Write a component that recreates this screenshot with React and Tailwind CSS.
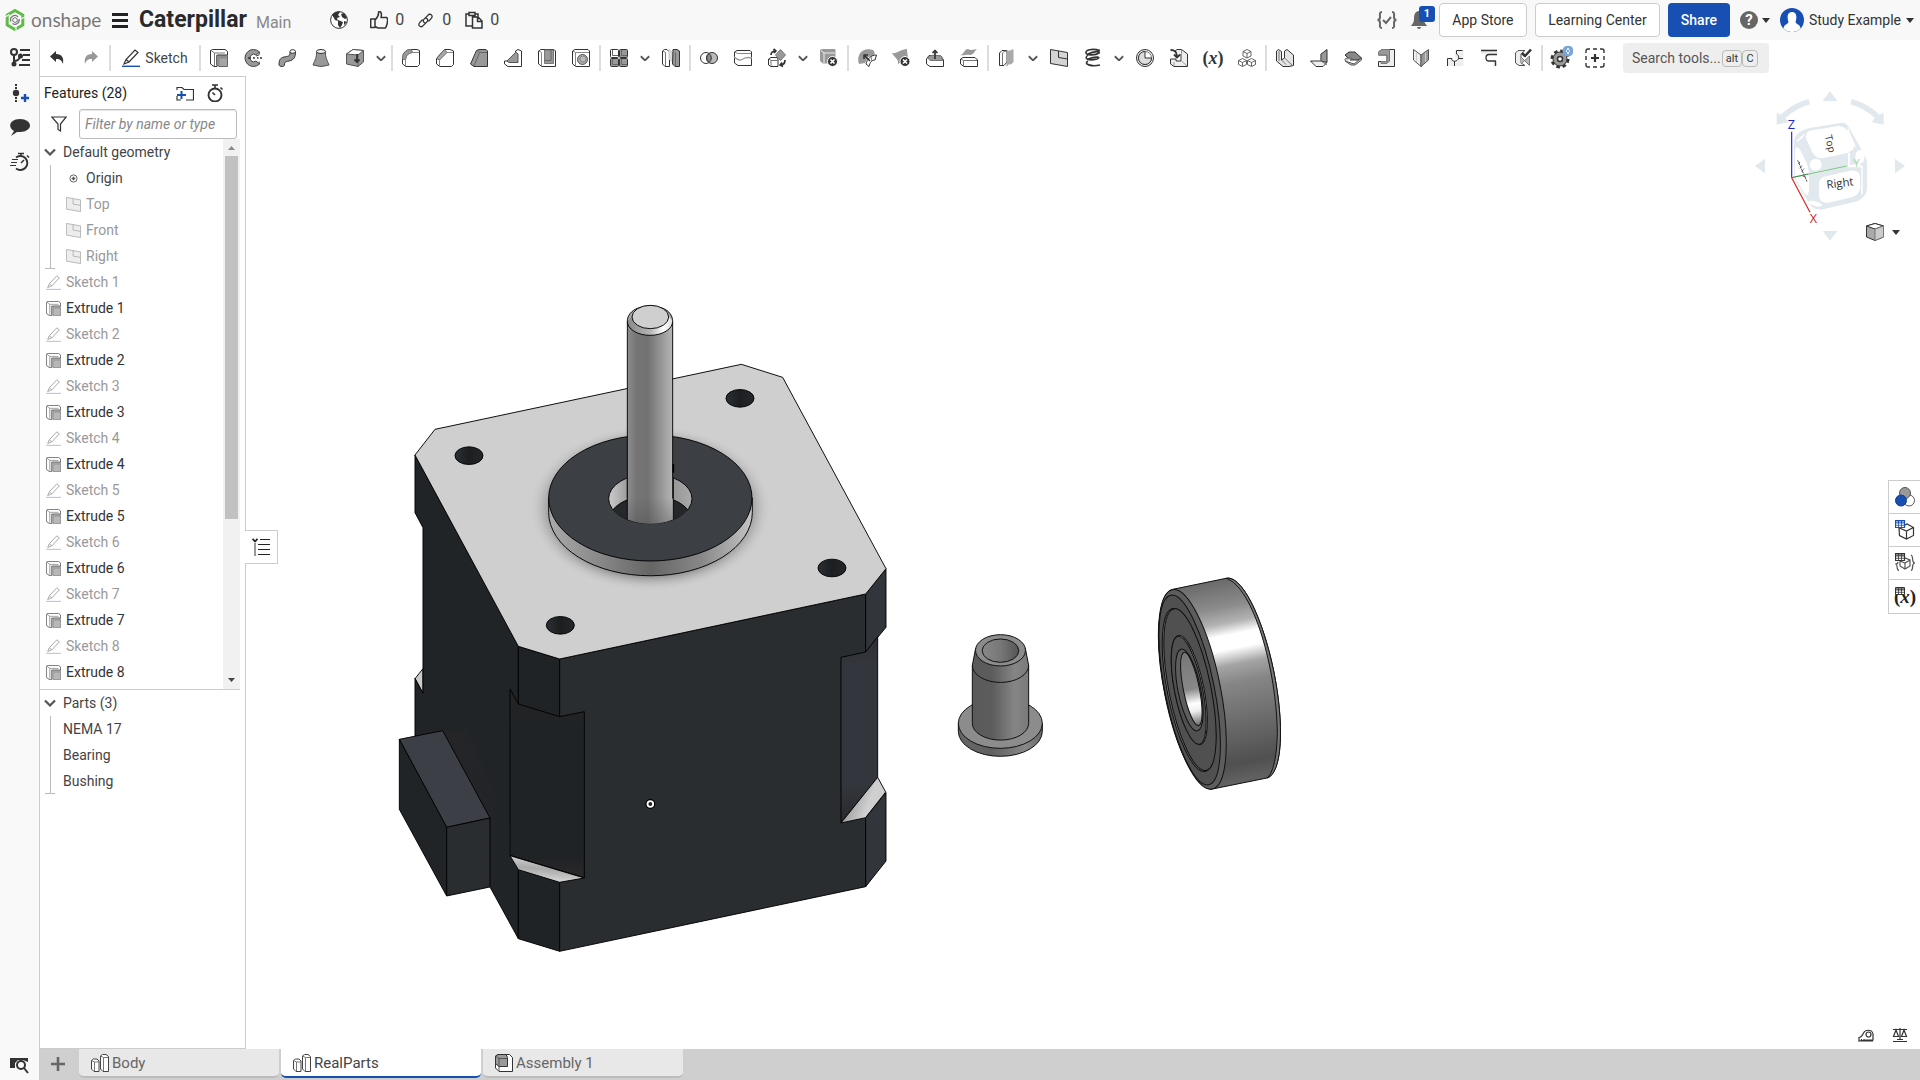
import { useState } from 'react';
import clsx from 'clsx';

// Toolbar drawings, all on an 18 x 18 grid
const icons = {
    extrude: (
        <>
            <path d="M.5 1.5 2.5 .5H15L17.5 2.500V6H7V17.500H4L.5 15Z" fill="#fff" />
            <path d="M1 1.500 4.500 4H15M4.500 4V17" stroke="#777" />
            <path d="M6.500 6.500H17.500V17.500H9L6.500 15.500Z" fill="#8c8c8c" stroke="#666" />
            <path d="M9.500 9.500H17V17H9.500Z" fill="#a6a6a6" stroke="none" />
        </>
    ),
    revolve: (
        <>
            <path d="M15.500 3A8.500 8.500 0 1 0 15.500 15L12 12A3.800 3.800 0 1 1 12 6Z" fill="#999" stroke="#444" />
            <path d="M15.500 3 15 6 12 7M15.500 15 15 12.500" stroke="#444" />
            <path d="M4 9H7M9 9H11M13 9H14.500M16 9H18" strokeWidth="1.400" />
        </>
    ),
    sweep: (
        <>
            <path d="M12 3C12 8 10 7 6 8C2 9 1 11 1 16C2 18 6 18 6.500 16C6.500 13 7 13 11 12C16 11 17.500 8 17.500 3Z" fill="#999" />
            <ellipse cx="14.700" cy="2.500" rx="2.800" ry="1.800" fill="#fff" />
        </>
    ),
    loft: (
        <>
            <path d="M4.500 2.500C5 8 3 11 1 16Q9 19 17 16C15 11 13 8 13.500 2.500Z" fill="#999" stroke="#555" />
            <ellipse cx="9" cy="2.500" rx="4.500" ry="2" fill="#eee" />
        </>
    ),
    thicken: (
        <>
            <path d="M.5 5 7 .5 17.500 1.500V13L12 17.500 .5 15Z" fill="#999" stroke="#555" />
            <path d="M.5 5 7 .5 17.500 1.500 12 6Z" fill="#fff" stroke="#555" />
            <path d="M12 6V17.500" stroke="#666" />
            <path d="M11 5V12.500M8.500 10.500 11 13 13.500 10.500" strokeWidth="1.800" />
        </>
    ),
    fillet: (
        <>
            <path d="M4 17.500H15.500L17.500 15.500V1.500L15 .5H9C3 .5 .5 5 .5 10V15Z" fill="#fff" />
            <path d="M9 .5C3 .5 .5 5 .5 10L3.500 11C4 6 7 3.500 11 3.500Z" fill="#999" stroke="#777" />
            <path d="M3.500 17V11C4 6 7 3.500 12 3.500H17" stroke="#888" />
        </>
    ),
    chamfer: (
        <>
            <path d="M4 17.500H15.500L17.500 15.500V2L14 .5H8.500L.5 9.500V15Z" fill="#fff" />
            <path d="M8.500 .5 .5 9.500 3.500 11 11 3.500Z" fill="#aaa" stroke="#666" />
            <path d="M3.500 11V17M11 3.500H17" stroke="#888" />
        </>
    ),
    draft: (
        <>
            <path d="M.5 15 6.500 1.500 9 .5H16L17.500 2V17.500H4Z" fill="#999" />
            <path d="M7 1.500 9.500 3.500H17M9.500 3.500 4 17" stroke="#666" />
        </>
    ),
    rib: (
        <>
            <path d="M.5 12 11.500 12V2L14 .5 17.500 2V17.500H4L.5 15Z" fill="#fff" />
            <path d="M3 12 12 3 14 5V13.500H5Z" fill="#999" stroke="#555" />
        </>
    ),
    shell: (
        <>
            <path d="M.5 2 3 .5H16L17.500 2V17.500H4L.5 15Z" fill="#fff" />
            <path d="M1 2 3.500 3.500V17" stroke="#888" />
            <path d="M6.500 1V14.500H15.500V1Z" fill="#999" stroke="#777" />
            <path d="M13 1V11.500H7" stroke="#666" />
        </>
    ),
    hole: (
        <>
            <path d="M.5 2 3 .5H16L17.500 2V17.500H4L.5 15Z" fill="#fff" />
            <path d="M1 2 3.500 3.500H17M3.500 3.500V17" stroke="#888" />
            <circle cx="10.500" cy="10.500" r="5" fill="#aaa" stroke="#555" />
            <circle cx="11" cy="10" r="3" fill="#bbb" stroke="#888" />
        </>
    ),
    pattern: (
        <>
            <rect x=".5" y=".5" width="8" height="8" rx="1" fill="#fff" />
            <rect x="9.500" y=".5" width="8" height="8" rx="1" fill="#999" />
            <rect x=".5" y="9.500" width="8" height="8" rx="1" fill="#999" />
            <rect x="9.500" y="9.500" width="8" height="8" rx="1" fill="#999" />
            <path d="M2.500 1V6.500H8M11.500 1V6.500H17M2.500 10V15.500H8M11.500 10V15.500H17" stroke="#666" />
        </>
    ),
    mirror: (
        <>
            <path d="M.5 2 2.500 .5H5L7.500 3V17.500H3L.5 15Z" fill="#fff" />
            <path d="M1 2 3.500 3.500V17" stroke="#777" />
            <path d="M7 .5 11 4V13L7 10Z" fill="#ddd" stroke="#ccc" />
            <path d="M11 .5H15L17.500 2V17.500H13L10.500 15Z" fill="#999" />
            <path d="M13.500 3.500V17" stroke="#666" />
        </>
    ),
    boolean: (
        <>
            <circle cx="6" cy="9" r="5.500" fill="#fff" />
            <circle cx="12" cy="9" r="5.500" fill="#bbb" />
            <path d="M9 4.500A5.500 5.500 0 0 1 9 13.500 5.500 5.500 0 0 1 9 4.500" fill="#888" />
        </>
    ),
    split: (
        <>
            <path d="M.5 3 3 1.500H16L17.500 3V16.500H4L.5 14Z" fill="#fff" />
            <path d="M1 3 3.500 4.500H17" stroke="#888" />
            <path d="M0 8C4 11 6 12 9 10C12 8 14 8 18 9" stroke="#999" strokeWidth="1.400" />
        </>
    ),
    transform: (
        <>
            <path d="M.5 10 3 8.500H9L10 10V17.500H3L.5 16Z" fill="#fff" />
            <path d="M1 10 3 11.500H10M3 11.500V17" stroke="#777" />
            <path d="M12.500 .5 17.500 6 12.500 11.500 7.500 6Z" fill="#999" stroke="#777" />
            <path d="M3 6C3 3 5 2 8 2M5.500 0 8 2 6 4M17 11C17 14 15 16 12 16M14 13.500 12 16 15 17.500" strokeWidth="1.700" />
        </>
    ),
    deletePart: (
        <>
            <path d="M.5 1 3 .5H15V14H3L.5 12Z" fill="#999" stroke="#999" />
            <path d="M1 1.500 4 4H15M4 4V14" stroke="#eee" />
            <circle cx="12.500" cy="12.500" r="5" fill="#333" stroke="#fff" />
            <path d="M10.500 10.500 14.500 14.500M14.500 10.500 10.500 14.500" stroke="#fff" strokeWidth="1.600" />
        </>
    ),
    modifyFillet: (
        <>
            <path d="M1 15C-2 6 4-2 15 1C17 3 17 5 16 7L10 8 7 14Z" fill="#999" stroke="none" />
            <path d="M8 15C9 10 13 6 18.500 6L17 11C14 11 12 13 11 17.500Z" fill="#fff" />
            <path d="M13 8 14 12" stroke="#777" />
            <path d="M6 6 12 12M6 10V6H10" strokeWidth="1.600" />
        </>
    ),
    deleteFace: (
        <>
            <path d="M0 4C5 5 9 0 15 0C15 6 17 8 15 10L6 15C7 10 2 8 0 4Z" fill="#999" stroke="none" />
            <circle cx="13" cy="12.500" r="5" fill="#333" stroke="#fff" />
            <path d="M11 10.500 15 14.500M15 10.500 11 14.500" stroke="#fff" strokeWidth="1.600" />
        </>
    ),
    moveFace: (
        <>
            <path d="M.5 10 3 6.500 15 7 17.500 11V17.500H4L.5 15Z" fill="#fff" />
            <path d="M2 9C4 6 5 7 8 6L15 7 17 11.500H4Z" fill="#999" stroke="#777" />
            <path d="M9 10V1.500M6.500 4 9 1.500 11.500 4" strokeWidth="1.700" />
        </>
    ),
    replaceFace: (
        <>
            <path d="M0 6C4 6 4 0 8 0 12 2 14 0 17 0 14 3 13 6 10 6 6 5 4 7 0 6Z" fill="#999" stroke="none" />
            <path d="M.5 10 3 8.500H15L17.500 11V17.500H4L.5 15Z" fill="#fff" />
            <path d="M1 10 3.500 11.500H17M3.500 11.500V17" stroke="#777" />
        </>
    ),
    offset: (
        <>
            <path d="M1.500 4 4 1.500H9V13L6 16.500H1.500Z" fill="#fff" />
            <path d="M4.500 16V5C4.500 3 6 2 9 2" stroke="#777" />
            <path d="M9 4C9 1 12 3 15 .5V13C12 17 10 13 9 17Z" fill="#aaa" stroke="#aaa" />
        </>
    ),
    plane: (
        <>
            <path d="M.5 .5 17.500 3.500V17.500L.5 14.500Z" fill="#d4d4d4" />
            <path d="M8.500 2V8.500L17.500 10" />
        </>
    ),
    helix: (
        <g strokeWidth="1.600">
            <path d="M16 1.500C8-1 1 1 2 4S12 6 15 4C17 2 10 2 4 5" />
            <path d="M4 6C-1 10 5 12 13 10C18 8 12 7 4 10" />
            <path d="M4 12C-1 15 7 18 16 16" />
        </g>
    ),
    sheetCircle: (
        <>
            <circle cx="9" cy="9" r="8.500" fill="#eee" />
            <circle cx="9" cy="9" r="6.500" fill="#fff" stroke="#777" />
            <path d="M9 2.500V9H15.500A6.500 6.500 0 1 1 9 2.500" fill="#ddd" />
        </>
    ),
    derived: (
        <>
            <path d="M4 3 7 .5H11.500L17.500 5V17.500H4L.5 15V10H6V12H11V5" fill="#eee" />
            <path d="M11.500 1V12L17 17M4 17V13" stroke="#999" />
            <path d="M.5 1C5 1 7 3 7 8M4 5.500 7 8.500 10 5.500" strokeWidth="1.800" />
        </>
    ),
    composite: (
        <g stroke="#555" strokeWidth=".9">
            <path d="M9 .5 13 2.500V7L9 9 5 7V2.500ZM5 2.500 9 4.500 13 2.500M9 4.500V9" fill="#fff" />
            <path d="M4.500 9.500 8.500 11.500V15.500L4.500 17.500 .5 15.500V11.500ZM.5 11.500 4.500 13.500 8.500 11.500M4.500 13.500V17" fill="#fff" />
            <path d="M13.500 9.500 17.500 11.500V15.500L13.500 17.500 9.500 15.500V11.500ZM9.500 11.500 13.500 13.500 17.500 11.500M13.500 13.500V17" fill="#fff" />
        </g>
    ),
    sheetModel: (
        <>
            <path d="M.5 2 2.500 .5 5.500 2.500V11L8.500 9V2L11 .5 17.500 6V16.500L13 17.500H7L.5 12Z" fill="#e4e4e4" />
            <path d="M5.500 11 10 15.500M8.500 9 16 16M3 2V12" stroke="#777" />
        </>
    ),
    flange: (
        <>
            <path d="M11 5 17 .5V13L11 17Z" fill="#999" />
            <path d="M.5 12H11L17 13.500 13 17.500H6Z" fill="#eee" />
            <path d="M11 5V12L17 16" stroke="#777" />
        </>
    ),
    hem: (
        <>
            <path d="M1 6 5 3H11L17.500 9 14 11H6Z" fill="#888" />
            <path d="M6 11C9 10 9 9 4 9C0 9 0 12 4 13L10 15 17.500 9V11L11 16H7L1 12" fill="#ccc" stroke="#555" />
        </>
    ),
    tab: (
        <>
            <path d="M.5 6V3L4 .5H16.500V17.500H.5V12.500H9V6Z" fill="#eee" />
            <path d="M.5 6V3L4 .5H11.500V12L9 14.500H3V12.500H9V6Z" fill="#999" stroke="#777" />
        </>
    ),
    bend: (
        <>
            <path d="M1.500 .5 9 6V17.500L1.500 11Z" fill="#eee" stroke="#555" />
            <path d="M9 6 16.500 .5V11L9 17.500Z" fill="#999" stroke="#555" />
            <path d="M4.500 3.500V13M13.500 3.500V13" stroke="#ccc" />
        </>
    ),
    joint: (
        <>
            <path d="M9 1H17.500V17H2V10H6C5 15 13 15 12 9C9 9 8 7 9 5Z" fill="#eee" stroke="none" />
            <path d="M16.500 1.500H10.500V5C13 6 14 10 10 12C7 13 5 11 6 9.500H1.500V17M12 9.500H17M8.500 12V17" />
        </>
    ),
    corner: (
        <>
            <path d="M1 .5H17V5H1ZM13 12H17V17H13Z" fill="#eee" stroke="none" />
            <path d="M1 1.500H17M17 5.500H9C5 5.500 5 12 9 12H15.500V17" strokeWidth="1.300" />
        </>
    ),
    finish: (
        <>
            <path d="M1.500 4 4 1.500H11L7 5V14L11 16.500H5L1.500 14Z" fill="#eee" stroke="#555" />
            <path d="M7 8 15.500 16.500V7L7 15" fill="#bbb" stroke="#777" />
            <path d="M8 4 11 7 17 .5" strokeWidth="2.500" />
        </>
    ),
};

const toolGroups = [
    ['extrude', 'revolve', 'sweep', 'loft', 'thicken', 'more'],
    ['fillet', 'chamfer', 'draft', 'rib', 'shell', 'hole'],
    ['pattern', 'more', 'mirror'],
    ['boolean', 'split', 'transform', 'more', 'deletePart'],
    ['modifyFillet', 'deleteFace', 'moveFace', 'replaceFace'],
    ['offset', 'more', 'plane', 'helix', 'more', 'sheetCircle', 'derived', 'variable', 'composite'],
    ['sheetModel', 'flange', 'hem', 'tab', 'bend', 'joint', 'corner', 'finish'],
];

const features = Array.from({ length: 8 }, (_, i) => [
    { name: `Sketch ${i + 1}`, sketch: true },
    { name: `Extrude ${i + 1}`, sketch: false },
]).flat();

const parts = ['NEMA 17', 'Bearing', 'Bushing'];

const Icon = ({ name, className = 'size-[18px]' }) => (
    <svg viewBox="0 0 18 18" className={clsx('shrink-0 overflow-visible', className)} fill="none" stroke="#333" strokeWidth="1" strokeLinejoin="round">
        {icons[name]}
    </svg>
);

const Chevron = ({ className = 'w-[10px]' }) => (
    <svg viewBox="0 0 12 8" className={className} fill="none" stroke="#555" strokeWidth="2.2">
        <path d="M1 1.500 6 6.500 11 1.500" />
    </svg>
);

const Caret = () => (
    <svg viewBox="0 0 8 5" className="w-2" fill="#333">
        <path d="M0 0H8L4 5Z" />
    </svg>
);

const Pencil = ({ className, muted }) => (
    <svg viewBox="0 0 18 18" className={clsx('shrink-0', className)} fill="none" stroke={muted ? '#aaa' : '#333'} strokeWidth="1.2">
        <path d="M2 15 4 10.500 13 1 16 3.500 7 13ZM4 10.500 7 13" />
        <path d="M0 17.300H18" stroke={muted ? '#b8cbee' : '#174fb3'} strokeWidth="1.4" />
    </svg>
);

const Separator = () => <div className="mx-px h-[26px] w-[2px] shrink-0 bg-[#ddd]" />;

const Header = () => (
    <header className="flex h-10 shrink-0 items-center justify-between bg-[#f8f8f8]">
        <div className="flex items-center">
            <svg viewBox="0 0 20 22" className="ml-[5px] h-[22px] w-5" fill="none">
                <path d="M10 1.500 17.800 6V16L10 20.500 2.200 16V6Z" stroke="#5dbb46" strokeWidth="3" />
                <path d="M0 8 4.500 5.500M11 22V17M20 8 15.500 10" stroke="#f8f8f8" strokeWidth="1.200" />
                <path d="M6 12.500A4.200 4.200 0 0 1 13 8M14 10A4.200 4.200 0 0 1 7.500 14.500" stroke="#777" strokeWidth="1.300" />
                <path d="M10 8.500 12.200 9.800V12.300L10 13.500 7.800 12.300V9.800Z" stroke="#777" strokeWidth="1" />
            </svg>
            <span className="ml-[6px] w-[68px] font-['Lato'] text-[19px] leading-[22px] text-[#777]">onshape</span>
            <button aria-label="Document menu" className="ml-[13px] flex w-4 flex-col gap-[3px]">
                <span className="h-[3px] bg-[#222]" />
                <span className="h-[3px] bg-[#222]" />
                <span className="h-[3px] bg-[#222]" />
            </button>
            <h1 className="ml-[11px] text-[23px] font-bold text-[#2a2a2a]">Caterpillar</h1>
            <span className="ml-[9px] mt-[6px] text-[16px] text-[#888]">Main</span>
            <button aria-label="Public document" className="ml-[39px]">
                <svg viewBox="0 0 18 18" className="size-[18px]" fill="#333">
                    <circle cx="9" cy="9" r="8.400" fill="#fff" stroke="#333" />
                    <path d="M2 4C4 1 7 0 10 1L8 4 10 6 7 7 8 10 5 9 4 7ZM11 3 14 2 17 7 15 8 12 6ZM8 9 13 11 12 14 10 17 8 14ZM14 10 17 11 14 14Z" />
                </svg>
            </button>
            <button className="ml-[22px] flex items-center gap-[7px] text-[16px] text-[#444]">
                <svg viewBox="0 0 18 18" className="size-[18px]" fill="none" stroke="#333" strokeWidth="1.5" strokeLinejoin="round">
                    <path d="M.7 8H5V16.500H.7ZM5 9C7 7 9 5 8.500 1C11-.5 12 3 11 6.500H17C18 9 17 14 15.500 17H8L5 15.500" />
                </svg>
                0
            </button>
            <button className="ml-[14px] flex items-center gap-[9px] text-[16px] text-[#444]">
                <svg viewBox="0 0 16 16" className="size-[15px]" fill="none" stroke="#333" strokeWidth="1.400" strokeLinecap="round">
                    <path d="M7.500 10.500C5.500 10 5 8 6.500 6.500L10.500 2.500C13-.5 17 3 14 6L11.500 8.500M8.500 5.500C10.500 6 11 8 9.500 9.500L5.500 13.500C3 16.500-1 13 2 10L4.500 7.500" />
                </svg>
                0
            </button>
            <button className="ml-[14px] flex items-center gap-[7px] text-[16px] text-[#444]">
                <svg viewBox="0 0 18 18" className="size-[18px]" fill="none" stroke="#333" strokeWidth="1.5">
                    <path d="M7 15H1V3H4M10 3H13V6M4 1.500H10V4.500H4ZM7.500 6H13L17 10V17H7.500ZM12.500 6V10.500H17" />
                </svg>
                0
            </button>
        </div>
        <div className="flex items-center">
            <button aria-label="Tasks">
                <svg viewBox="0 0 20 18" className="h-[18px] w-5" fill="none" stroke="#666" strokeWidth="2">
                    <path d="M5 1C2 1 3 4 3 6C3 8 2 9 .5 9C2 9 3 10 3 12C3 14 2 17 5 17M15 1C18 1 17 4 17 6C17 8 18 9 19.500 9C18 9 17 10 17 12C17 14 18 17 15 17M6 9 9 12 14 6" />
                </svg>
            </button>
            <button aria-label="Notifications" className="relative ml-[14px]">
                <svg viewBox="0 0 16 18" className="h-[18px] w-4" fill="#666">
                    <path d="M8 0C12 0 13 4 13 8C13 12 15 13 16 15H0C1 13 3 12 3 8C3 4 4 0 8 0ZM6 16H10C10 18.500 6 18.500 6 16" />
                </svg>
                <span className="absolute -top-[5px] left-2 size-4 rounded-[3px] bg-[#174fb3] text-center text-[11px] leading-4 font-bold text-white">1</span>
            </button>
            <button className="ml-3 h-[34px] w-[88px] rounded border border-[#ccc] bg-white">App Store</button>
            <button className="ml-2 h-[34px] w-[125px] rounded border border-[#ccc] bg-white">Learning Center</button>
            <button className="ml-2 h-[34px] w-[62px] rounded bg-[#174fb3] font-medium text-white">Share</button>
            <button aria-label="Help" className="ml-[10px] flex items-center gap-1">
                <span className="size-[18px] rounded-full bg-[#666] text-center text-[15px] leading-[18px] font-bold text-white">?</span>
                <Caret />
            </button>
            <button className="mr-[6px] ml-[10px] flex items-center gap-[5px]">
                <svg viewBox="0 0 24 24" className="size-6">
                    <circle cx="12" cy="12" r="12" fill="#174fb3" />
                    <path d="M12 4C17 4 17 10 15.500 14C17 17 20 16 20.500 20.500A12 12 0 0 1 3.500 20.500C4 16 7 17 8.500 14C7 10 7 4 12 4Z" fill="#fff" />
                </svg>
                Study Example
                <Caret />
            </button>
        </div>
    </header>
);

const Rail = () => (
    <nav className="flex w-10 shrink-0 flex-col items-center border-r border-[#ccc] bg-[#f9f9f9] pt-2 pb-[6px]">
        <button aria-label="Feature list">
            <svg viewBox="0 0 20 20" className="size-5" fill="none" stroke="#333" strokeWidth="2">
                <circle cx="4" cy="4" r="3" />
                <path d="M4 7V16M4 13C7 13 9 12 10 9M10 2H20M13 7H20M12 12H20M9 17H20" />
                <circle cx="4" cy="16" r="1.500" fill="#333" />
                <circle cx="10.500" cy="8" r="1.500" fill="#333" />
            </svg>
        </button>
        <button aria-label="Versions" className="mt-4">
            <svg viewBox="0 0 20 20" className="size-5" fill="none" stroke="#333" strokeWidth="2">
                <circle cx="6" cy="9" r="3.200" fill="#333" stroke="none" />
                <path d="M6 0V2M6 3V5M6 13V15M6 16V18" />
                <path d="M11 14H19M15 10V18" stroke="#174fb3" strokeWidth="2.400" />
            </svg>
        </button>
        <button aria-label="Comments" className="mt-[14px]">
            <svg viewBox="0 0 20 18" className="h-[18px] w-5" fill="#333">
                <path d="M10 1C16 1 20 4 20 7.500S16 14 10 14H7L1 18 4 13C-3 9 0 1 10 1" />
            </svg>
        </button>
        <button aria-label="History" className="mt-4">
            <svg viewBox="0 0 20 20" className="size-5" fill="none" stroke="#333" strokeWidth="1.900">
                <path d="M6 5.500A7 7 0 1 1 6 16.500" />
                <path d="M8 1.500H14M11 1V4M17 3.500 19 5.500M11 11 14 8" strokeWidth="1.500" />
                <path d="M2 7.500H8M1 10.500H7M0 13.500H6" strokeWidth="1.200" />
            </svg>
        </button>
        <button aria-label="Find in document" className="mt-auto">
            <svg viewBox="0 0 20 18" className="h-[18px] w-5" fill="none" stroke="#333" strokeWidth="2">
                <path d="M0 2H18V6L13 4H8L5 7V12H0Z" fill="#333" stroke="none" />
                <circle cx="11" cy="9" r="4" />
                <path d="M14 12 18 17" />
            </svg>
        </button>
    </nav>
);

const Toolbar = () => (
    <div className="flex h-9 shrink-0 items-center">
        <button aria-label="Undo" className="flex w-[34px] justify-center">
            <svg viewBox="0 0 14 14" className="size-[14px]" fill="#333">
                <path d="M6 0V3C12 3 14 7 13 13C11 8 9 8 6 8V11L0 5.500Z" />
            </svg>
        </button>
        <button aria-label="Redo" className="flex w-[34px] justify-center">
            <svg viewBox="0 0 14 14" className="size-[14px]" fill="#999">
                <path d="M8 0V3C2 3 0 7 1 13C3 8 5 8 8 8V11L14 5.500Z" />
            </svg>
        </button>
        <Separator />
        <button className="flex w-[86px] items-center justify-center gap-[5px] text-[#444]">
            <Pencil className="size-[18px]" />
            Sketch
        </button>
        <Separator />
        {toolGroups.map((group, g) => (
            <div key={g} className="flex items-center">
                {group.map((name, i) =>
                    name === 'more' ? (
                        <button key={i} aria-label="More tools" className="flex w-[18px] justify-center">
                            <Chevron />
                        </button>
                    ) : (
                        <button key={i} aria-label={name} className="flex w-[34px] justify-center">
                            {name === 'variable' ? (
                                <span className="font-['Liberation_Serif'] text-[18px] leading-[18px] font-bold">
                                    (<i>x</i>)
                                </span>
                            ) : (
                                <Icon name={name} />
                            )}
                        </button>
                    )
                )}
                <Separator />
            </div>
        ))}
        <button aria-label="Custom features" className="flex w-[34px] justify-center">
            <svg viewBox="0 0 24 24" className="size-6" fill="none">
                <circle cx="11" cy="13" r="7.500" stroke="#333" strokeWidth="4" strokeDasharray="3.4 2.490" />
                <circle cx="11" cy="13" r="7" fill="#999" stroke="#333" />
                <circle cx="11" cy="13" r="2.500" fill="#fff" stroke="#333" strokeWidth="1.500" />
                <circle cx="19" cy="5" r="5.500" fill="#7aa5d6" />
                <path d="M19 2V4M19 6V8M17 5H18M20 5H21" stroke="#fff" strokeWidth="1.500" />
            </svg>
        </button>
        <button aria-label="Add to toolbar" className="flex w-[34px] justify-center">
            <svg viewBox="0 0 20 20" className="size-5" fill="none" stroke="#333" strokeWidth="1.400">
                <path d="M1 5V3Q1 1 3 1H5M8 1H12M15 1H17Q19 1 19 3V5M19 8V12M19 15V17Q19 19 17 19H15M12 19H8M5 19H3Q1 19 1 17V15M1 12V8" />
                <path d="M6 10H14M10 6V14" strokeWidth="2.200" />
            </svg>
        </button>
        <label className="ml-[11px] flex h-[30px] w-[146px] items-center rounded bg-[#eee] pr-[11px] pl-[9px]">
            <input type="text" aria-label="Search tools" placeholder="Search tools..." className="w-0 flex-1 bg-transparent outline-none placeholder:text-[#555]" />
            <kbd className="h-[17px] w-5 shrink-0 rounded-sm border border-[#bbb] text-center font-['Roboto'] text-[11px] leading-[15px]">alt</kbd>
            <kbd className="h-[17px] w-4 shrink-0 rounded-sm border border-[#bbb] text-center font-['Roboto'] text-[11px] leading-[15px]">C</kbd>
        </label>
    </div>
);

const TreeHeading = ({ open, onClick, children }) => (
    <button onClick={onClick} aria-expanded={open} className="flex h-[26px] w-full items-center gap-[7px] pl-1 text-left">
        <Chevron className="w-3" />
        {children}
    </button>
);

const FeaturePanel = () => {
    const [geometryOpen, setGeometryOpen] = useState(true);
    const [partsOpen, setPartsOpen] = useState(true);

    return (
        <aside className="flex w-[206px] shrink-0 flex-col border border-l-0 border-[#ccc]">
            <div className="flex h-8 items-center pl-1">
                <h2 className="w-[132px] text-[#222]">Features (28)</h2>
                <button aria-label="Add folder">
                    <svg viewBox="0 0 18 16" className="h-4 w-[18px]" fill="none" stroke="#333" strokeWidth="1.200">
                        <path d="M1 5V2.500H6L8 4.500H17.500V15H10M1 11V15H5" />
                        <path d="M1 10H10M5.500 6V14" stroke="#174fb3" strokeWidth="2" />
                    </svg>
                </button>
                <button aria-label="Regeneration times" className="ml-3">
                    <svg viewBox="0 0 18 18" className="size-[18px]" fill="none" stroke="#333" strokeWidth="1.900">
                        <circle cx="9" cy="11" r="6.500" />
                        <path d="M6 1H12M9 1V4M14.500 3.500 16.500 5.500M9 11 6.500 8.500" strokeWidth="1.600" />
                    </svg>
                </button>
            </div>
            <label className="flex h-[30px] shrink-0 items-center pl-[11px]">
                <svg viewBox="0 0 16 16" className="mr-3 size-4" fill="none" stroke="#333" strokeWidth="1.200">
                    <path d="M.8 1H15.200L9.500 8V15L7 13.500V8Z" />
                </svg>
                <input
                    type="text"
                    aria-label="Filter by name or type"
                    placeholder="Filter by name or type"
                    className="h-[30px] w-[158px] rounded-[3px] border border-[#bbb] px-[5px] italic shadow-[inset_0_1px_1px_rgba(0,0,0,0.1)] outline-none placeholder:text-[#888]"
                />
            </label>
            <div className="mr-[5px] flex h-[551px] shrink-0 overflow-hidden border-b border-[#ccc]">
                <div className="flex-1 text-[#444]">
                    <TreeHeading open={geometryOpen} onClick={() => setGeometryOpen(!geometryOpen)}>
                        Default geometry
                    </TreeHeading>
                    {geometryOpen && (
                        <ul className="relative">
                            <li className="flex h-[26px] items-center gap-2 pl-[29px]">
                                <svg viewBox="0 0 10 10" className="size-[9px]" fill="none" stroke="#555">
                                    <circle cx="5" cy="5" r="4" />
                                    <path d="M3 5H7M5 3V7" strokeWidth="1.500" />
                                </svg>
                                Origin
                            </li>
                            {['Top', 'Front', 'Right'].map((name) => (
                                <li key={name} className="flex h-[26px] items-center gap-[5px] pl-[26px] text-[#999]">
                                    <Icon name="plane" className="size-[15px] opacity-40" />
                                    {name}
                                </li>
                            ))}
                            <span className="absolute top-0 bottom-0 left-[10px] w-px bg-[#bbb]" />
                            <span className="absolute bottom-0 left-[5px] h-px w-[10px] bg-[#bbb]" />
                        </ul>
                    )}
                    <ul>
                        {features.map((f) => (
                            <li key={f.name} className={clsx('flex h-[26px] items-center gap-[5px] pl-[6px]', f.sketch ? 'text-[#999]' : 'text-[#333]')}>
                                {f.sketch ? <Pencil muted className="size-[15px]" /> : <Icon name="extrude" className="size-[15px] opacity-80" />}
                                {f.name}
                            </li>
                        ))}
                    </ul>
                </div>
                <div className="flex w-[17px] flex-col items-center bg-[#f1f1f1] py-[7px]">
                    <svg viewBox="0 0 7 4" className="w-[7px]" fill="#888">
                        <path d="M0 4 3.500 0 7 4Z" />
                    </svg>
                    <div className="mt-[6px] h-[363px] w-[13px] bg-[#c1c1c1]" />
                    <svg viewBox="0 0 7 4" className="mt-auto w-[7px]" fill="#444">
                        <path d="M0 0 3.500 4 7 0Z" />
                    </svg>
                </div>
            </div>
            <div className="text-[#444]">
                <TreeHeading open={partsOpen} onClick={() => setPartsOpen(!partsOpen)}>
                    Parts (3)
                </TreeHeading>
                {partsOpen && (
                    <ul className="relative">
                        {parts.map((part) => (
                            <li key={part} className="h-[26px] pl-[23px] leading-[26px]">
                                {part}
                            </li>
                        ))}
                        <span className="absolute top-0 bottom-0 left-[10px] w-px bg-[#bbb]" />
                        <span className="absolute bottom-0 left-[5px] h-px w-[10px] bg-[#bbb]" />
                    </ul>
                )}
            </div>
        </aside>
    );
};

const Motor = () => (
    <g transform="translate(390 290) scale(.33333)" stroke="#000" strokeWidth="2.800" strokeLinejoin="round">
        <path d="M99 1136 75 1166 99 1210Z" fill="#ccc" />
        <path d="M75 495V668L99 713V1210L75 1165V1380L300 1791 385 1946V1069Z" fill="#212427" />
        <path d="M385 1069 509 1107V1984L385 1946Z" fill="#202326" />
        <path d="M509 1107 1427 912V1790L509 1984Z" fill="#2a2d30" />
        <path d="M1427 912 1488 836V1012L1427 1086Z" fill="#32353c" />
        <path d="M1353 1102 1427 1086 1463 1040V1462L1353 1599Z" fill="url(#recessRight)" />
        <path d="M1463 1462 1487 1506 1427 1583 1353 1599Z" fill="url(#ledge)" />
        <path d="M1427 1583 1488 1508V1713L1427 1790Z" fill="#32353c" />
        <path d="M360 1197 385 1242 509 1280 583 1265V1763L360 1696Z" fill="url(#recess)" />
        <path d="M360 1697 583 1764 509 1777 385 1739Z" fill="url(#ledgeLeft)" />
        <path d="M158 1322 230 1322 358 1600V1696L320 1800 300 1791V1584Z" fill="url(#contact)" stroke="none" />
        <path d="M28 1348 158 1322 300 1584 170 1612Z" fill="#3c3f45" />
        <path d="M28 1348 170 1612V1818L28 1558Z" fill="#212427" />
        <path d="M170 1612 300 1584V1791L170 1818Z" fill="#2a2d30" />

        <path d="M135 418 1054 223 1178 262 1488 836 1427 912 509 1107 385 1069 75 495Z" fill="#cfcfcf" />
        {[[237, 497], [1050, 325], [1326, 834], [511, 1006]].map(([x, y]) => (
            <ellipse key={x} cx={x} cy={y} rx="42" ry="26.500" fill="url(#bore)" />
        ))}
        <ellipse cx="781" cy="655" rx="365" ry="250" fill="url(#bossShadow)" stroke="none" />
        <path d="M476 624V667A305 190 0 0 0 1087 667V624Z" fill="url(#bossSide)" />
        <ellipse cx="781" cy="624" rx="305" ry="189" fill="#3c3f44" />
        <ellipse cx="781" cy="626" rx="125" ry="75" fill="url(#boreWall)" />
        <g clipPath="url(#boreClip)">
            <ellipse cx="781" cy="692" rx="125" ry="75" fill="#25282b" />
            <path d="M712 94V720H850V94Z" fill="url(#shaft)" />
            <path d="M712 620V720H850V620Z" fill="url(#shaftFoot)" stroke="none" />
        </g>
        <path d="M712 626V94H848V626" fill="url(#shaft)" />
        <path d="M850 522V548" strokeWidth="5" />
        <path d="M712 94C712 78 722 62 745 54A68 42 0 0 1 816 54C840 62 848 80 848 94" fill="#aaa" />
        <path d="M712 94A68 42 0 0 0 848 94L836 78A55 35 0 0 0 727 78Z" fill="url(#shaftChamfer)" stroke="none" />
        <path d="M712 94A68 42 0 0 0 848 94" fill="none" />
        <ellipse cx="781" cy="81" rx="55" ry="35" fill="#cfcfcf" />
        <circle cx="781" cy="1542" r="9.500" fill="#333" stroke="#000" strokeWidth="11" />
        <circle cx="781" cy="1542" r="8.500" fill="#222" stroke="#fff" strokeWidth="5.500" />
    </g>
);

const SmallParts = () => (
    <g transform="translate(930 560) scale(.33333)" stroke="#111" strokeWidth="3">
        <path d="M85 490V514A126 75 0 0 0 337 514V490Z" fill="url(#flangeSide)" />
        <ellipse cx="211" cy="490" rx="126" ry="75" fill="#8c8c8c" />
        <path d="M127 316V490A84 50 0 0 0 296 490V316Z" fill="url(#bushing)" />
        <path d="M127 316A84 51 0 0 0 296 316L286 265H137Z" fill="url(#bushing)" />
        <ellipse cx="211.500" cy="271" rx="75" ry="47" fill="#8c8c8c" />
        <ellipse cx="211.500" cy="272" rx="55" ry="35" fill="url(#bushingBore)" />

        <path d="M728 88 888 55A84 305 -11.300 0 1 1011 654L848 687A84 305 -11.300 0 1 728 88Z" fill="url(#bearingSide)" />
        <path d="M888 55C970 80 1040 330 1042 520C1040 600 1028 640 1011 654A84 305 -11.300 0 0 888 55Z" fill="#777" />
        <ellipse cx="787" cy="388" rx="84" ry="305" transform="rotate(-11.300 787 388)" fill="#5d5d5d" />
        <ellipse cx="779" cy="390" rx="74" ry="290" transform="rotate(-11.300 779 390)" fill="#505050" />
        <ellipse cx="777" cy="390" rx="65" ry="249" transform="rotate(-11.300 777 390)" fill="#777" />
        <ellipse cx="780" cy="389" rx="63" ry="247" transform="rotate(-11.300 780 389)" fill="#505050" />
        <ellipse cx="778" cy="390" rx="44" ry="167" transform="rotate(-11.300 778 390)" fill="#999" />
        <ellipse cx="776" cy="391" rx="42" ry="165" transform="rotate(-11.300 776 391)" fill="#505050" />
        <ellipse cx="778" cy="390" rx="34" ry="125" transform="rotate(-11.300 778 390)" fill="#5d5d5d" />
        <ellipse cx="784" cy="387" rx="24" ry="112" transform="rotate(-11.300 784 387)" fill="url(#bearingBore)" />
    </g>
);

const Gradient = ({ id, stops, ...rest }) => (
    <linearGradient id={id} {...rest}>
        {stops.map(([offset, color]) => (
            <stop key={offset} offset={offset} stopColor={color} />
        ))}
    </linearGradient>
);

const vertical = { x1: 0, y1: 0, x2: 0, y2: 1 };

const Model = () => (
    <svg viewBox="246 76 1674 973" className="h-full w-full" role="img" aria-label="NEMA 17, Bushing and Bearing">
        <defs>
            <Gradient id="shaft" gradientUnits="userSpaceOnUse" x1="712" x2="850" y1="0" y2="0" stops={[[0, '#8c8c8c'], [0.2, '#757575'], [0.45, '#727272'], [0.6, '#858585'], [1, '#b8b8b8']]} />
            <Gradient id="shaftChamfer" stops={[[0, '#888'], [0.5, '#b4b4b4'], [0.8, '#fff'], [1, '#ddd']]} />
            <Gradient id="bossSide" stops={[[0, '#aaa'], [0.25, '#888'], [0.5, '#666'], [0.75, '#888'], [1, '#c4c4c4']]} />
            <Gradient id="boreWall" stops={[[0, '#ccc'], [0.4, '#777'], [1, '#aaa']]} />
            <Gradient id="bore" stops={[[0, '#2b3035'], [0.5, '#1c1e20'], [1, '#25272b']]} />
            <Gradient id="bushing" stops={[[0, '#5a5a5a'], [0.35, '#5c5c5c'], [0.75, '#858585'], [1, '#7a7a7a']]} />
            <Gradient id="flangeSide" stops={[[0, '#666'], [0.4, '#606060'], [0.8, '#888'], [1, '#666']]} />
            <Gradient id="bushingBore" stops={[[0, '#888'], [0.5, '#777'], [1, '#555']]} />
            <Gradient id="recess" {...vertical} stops={[[0, '#242324'], [0.2, '#202326'], [0.9, '#202326'], [1, '#2a2829']]} />
            <Gradient id="recessRight" {...vertical} stops={[[0, '#2c2e34'], [0.15, '#33363c'], [0.8, '#33363c'], [1, '#28292d']]} />
            <Gradient id="ledge" x1="0" y1=".4" x2="1" y2=".8" stops={[[0, '#888'], [0.6, '#d0d0d0'], [1, '#ccc']]} />
            <Gradient id="ledgeLeft" x1=".6" y1="0" x2=".4" y2="1" stops={[[0, '#ddd'], [0.5, '#aaa'], [1, '#ddd']]} />
            <Gradient id="contact" stops={[[0, '#252527'], [1, '#212427']]} />
            <Gradient id="bearingBore" {...vertical} stops={[[0, '#777'], [0.5, '#888'], [0.7, '#fff'], [0.8, '#eee'], [1, '#666']]} />
            <Gradient
                id="bearingSide"
                gradientUnits="userSpaceOnUse"
                x1="725"
                y1="88"
                x2="844"
                y2="676"
                stops={[[0, '#6a6a6a'], [0.14, '#8c8c8c'], [0.22, '#b4b4b4'], [0.28, '#fff'], [0.35, '#fff'], [0.43, '#a4a4a4'], [0.52, '#868686'], [0.8, '#606060'], [0.92, '#505050'], [1, '#606060']]}
            />
            <linearGradient id="shaftFoot" {...vertical}>
                <stop offset="0" stopColor="#444" stopOpacity="0" />
                <stop offset="1" stopColor="#444" stopOpacity=".4" />
            </linearGradient>
            <radialGradient id="bossShadow">
                <stop offset=".8" stopColor="#888" stopOpacity="1" />
                <stop offset="1" stopColor="#cfcfcf" stopOpacity="0" />
            </radialGradient>
            <clipPath id="boreClip">
                <ellipse cx="781" cy="626" rx="125" ry="75" />
            </clipPath>
        </defs>
        <Motor />
        <SmallParts />
    </svg>
);

const ViewCube = () => (
    <div className="absolute top-1 right-0 h-[170px] w-[220px]">
        <svg viewBox="0 0 660 510" className="h-full w-full font-['Open_Sans']" fill="#e1e8ee">
            <path d="M390 33 412 63H368ZM390 482 412 453H368ZM165 258 195 236V280ZM615 258 585 236V280Z" />
            <path d="M326 57 330 73C300 82 276 96 256 114L266 126 230 134V98L243 104C266 82 293 66 326 57Z" />
            <path d="M455 57 451 73C481 82 505 96 525 114L515 126 551 134V98L538 104C515 82 488 66 455 57Z" />
            <path d="M300 156Q310 148 330 144L425 128Q438 127 446 140L494 226Q502 240 501 260V325Q500 345 488 352Q484 358 472 364L370 388Q345 392 330 374L292 312Q282 295 282 270V185Q284 165 300 156Z" />
            <g fill="#fff">
                <path d="M330 152 415 138Q435 138 446 158L462 190Q468 210 440 220L370 234Q350 237 338 218L320 180Q312 158 330 152Z" />
                <path d="M372 290 450 272Q480 268 480 292V322Q478 346 455 352L385 368Q358 372 357 345V312Q357 294 372 290Z" />
                <path d="M286 205Q292 196 302 212L318 245Q327 262 327 290V330Q324 358 310 334L290 302Q284 290 284 270Z" />
                <circle cx="347" cy="254" r="18" />
                <ellipse cx="480" cy="230" rx="14" ry="21" />
                <ellipse cx="346" cy="371" rx="21" ry="7" transform="rotate(15 346 371)" />
                <path d="M287 188Q300 168 315 161Q310 175 287 188ZM443 136 450 160 470 205Q455 190 443 165ZM444 218H450V255L480 250 484 262 444 262ZM484 255 488 258V345L483 340Z" />
            </g>
            <path d="M293 241 321 305M296 252 300 244M300 265 306 256M305 276 312 266M308 288 318 290" stroke="#555" strokeWidth="3" strokeDasharray="7 2" />
            <path d="M275 155V293" stroke="#2a2ad0" strokeWidth="3.500" />
            <path d="M275 293 440 258" stroke="#7ccf7c" strokeWidth="3" />
            <path d="M275 293 325 282" stroke="#4d8a4d" strokeWidth="3" />
            <path d="M275 293 330 397" stroke="#d22" strokeWidth="3.500" />
            <text x="263" y="147" fontSize="38" fill="#22c">Z</text>
            <text x="460" y="262" fontSize="34" fill="#9bdc9b">Y</text>
            <text x="329" y="430" fontSize="38" fill="#d22">X</text>
            <text x="381" y="326" fontSize="34" fill="#333" transform="rotate(-7 381 326)">Right</text>
            <text x="0" y="0" fontSize="30" fill="#333" transform="translate(374 168) rotate(76)">Top</text>
        </svg>
        <button aria-label="View options" className="absolute right-5 bottom-[9px] flex items-center gap-2">
            <svg viewBox="0 0 18 18" className="size-[18px]" stroke="#333" strokeLinejoin="round">
                <path d="M9 .5 17.500 3V14L9 17.500 .5 14V3Z" fill="#aaa" />
                <path d="M9 .5 17.500 3 9 6 .5 3Z" fill="#fff" />
                <path d="M9 6 17.500 3V14L9 17.500Z" fill="#ccc" stroke="#777" />
            </svg>
            <Caret />
        </button>
    </div>
);

const TableBadge = ({ color = '#333', fill = '#888' }) => (
    <g>
        <path d="M.5 .5H9.500V7.500H.5Z" fill="#fff" stroke={color} />
        <path d="M1 1H9V3H1Z" fill={fill} stroke="none" />
        <path d="M.5 3H9.500M.5 5.300H9.500M3.500 .5V7.500M6.500 .5V7.500" stroke={color} strokeWidth=".8" />
    </g>
);

const SidePanelTabs = () => (
    <div className="absolute top-[404px] right-0 flex w-8 flex-col divide-y divide-[#ccc] border border-r-0 border-[#ccc] bg-white">
        <button aria-label="Appearance" className="flex h-[33px] items-center justify-center">
            <svg viewBox="0 0 20 20" className="size-5" stroke="#555">
                <circle cx="14" cy="13.500" r="5.500" fill="#fff" />
                <circle cx="10" cy="6" r="5.500" fill="#999" />
                <circle cx="6" cy="13.500" r="5.500" fill="#174fb3" stroke="#123f8f" />
            </svg>
        </button>
        <button aria-label="Configurations" className="flex h-[33px] items-center justify-center">
            <svg viewBox="0 0 20 20" className="size-5" fill="none" stroke="#333" strokeWidth="1.200">
                <path d="M4 8 12 4 18.500 7.500V15.500L11.500 19 4.500 15.500ZM4.500 8 11.500 11 18.500 7.500M11.500 11V19" />
                <TableBadge color="#174fb3" fill="#7ab5ea" />
            </svg>
        </button>
        <button aria-label="Custom tables" className="flex h-[33px] items-center justify-center">
            <svg viewBox="0 0 20 20" className="size-5" fill="none" stroke="#555" strokeWidth="1.200">
                <path d="M5 7 10 5 15 7V13L10 16 5 13ZM5 8 10 10 15 7M10 10V16M3 9C2 12 3 10 1 11 3 12 1 17 4 17.500M16 2C19 3 16 9 19.500 10 16 11 19 17 16 17.500" />
                <TableBadge />
            </svg>
        </button>
        <button aria-label="Variable table" className="flex h-[33px] items-center justify-center">
            <svg viewBox="0 0 20 20" className="size-5 overflow-visible" fill="#222" strokeWidth="1">
                <text x="-1" y="16" fontSize="19" fontWeight="bold" className="font-['Liberation_Serif']">
                    (<tspan fontStyle="italic">x</tspan>)
                </text>
                <TableBadge />
            </svg>
        </button>
    </div>
);

const Viewport = () => (
    <main className="relative min-w-0 flex-1">
        <Model />
        <button aria-label="Show instances" className="absolute top-[454px] -left-px flex h-[34px] w-[33px] items-center justify-center border border-l-0 border-[#ccc] bg-white">
            <svg viewBox="0 0 18 18" className="size-[18px]" fill="none" stroke="#222" strokeWidth="1">
                <path d="M8 1.500H18M6 6.500H18M6 11.500H18M6 16.500H18" />
                <path d="M.5 .8 3 3.500 5.500 .8" strokeWidth="1.800" />
                <path d="M3 5V18" stroke="#999" strokeWidth="2" />
            </svg>
        </button>
        <ViewCube />
        <SidePanelTabs />
        <div className="absolute right-3 bottom-[6px] flex gap-[18px]">
            <button aria-label="Measure">
                <svg viewBox="0 0 16 16" className="size-4" fill="none" stroke="#333" strokeWidth="1.200">
                    <path d="M1 14V10.500C3 10.500 4 9 5 7 7 2 14 2 15 7V13H8L1 14ZM1 14H15M3.500 14V12M6 14V12" />
                    <circle cx="10.500" cy="7.500" r="2.500" />
                </svg>
            </button>
            <button aria-label="Mass properties">
                <svg viewBox="0 0 16 16" className="size-4" fill="none" stroke="#333" strokeWidth="1.200">
                    <path d="M8 1V12M1 2.500H15M4 3 1.500 9.500H6.500ZM12 3 9.500 9.500H14.500ZM1 14.500H15M5 12.500H11" />
                </svg>
            </button>
        </div>
    </main>
);

const PartStudioIcon = () => (
    <svg viewBox="0 0 18 18" className="size-[18px]" fill="#fff" stroke="#444" strokeWidth="1" strokeLinejoin="round">
        <path d="M.5 6.500 2.500 5H6L8 7V17.500H3L.5 15Z" />
        <path d="M.5 6.500 3.500 8H8M3.500 8V17" fill="none" stroke="#777" />
        <path d="M9.500 2 11.500 .5H15L17.500 2.500V17.500H12L9.500 15Z" />
        <path d="M9.500 2 12.500 3.500H17M12.500 3.500V17" fill="none" stroke="#777" />
    </svg>
);

const AssemblyIcon = () => (
    <svg viewBox="0 0 18 18" className="size-[18px]" fill="#fff" stroke="#333" strokeWidth="1" strokeLinejoin="round">
        <path d="M.5 2.500 3 .5H14.500L17.500 3.500V17.500H4L.5 14Z" />
        <path d="M.5 2 3 .5H11L12.500 3.500V12.500H4L.5 9.500Z" fill="#999" />
        <path d="M.5 2 4 4.500H12.500M4 4.500V17" fill="none" stroke="#555" />
    </svg>
);

const DocumentTabs = () => {
    const [active, setActive] = useState('RealParts');
    const tabs = [
        { name: 'Body', icon: <PartStudioIcon /> },
        { name: 'RealParts', icon: <PartStudioIcon /> },
        { name: 'Assembly 1', icon: <AssemblyIcon /> },
    ];

    return (
        <footer className="flex h-[31px] shrink-0 items-start bg-[#cfcfcf]">
            <button aria-label="Add tab" className="flex h-[30px] w-[39px] items-center justify-center pr-1">
                <svg viewBox="0 0 14 14" className="size-[14px]" stroke="#666" strokeWidth="2.600">
                    <path d="M0 7H14M7 0V14" />
                </svg>
            </button>
            <div className="flex gap-[2px]">
                {tabs.map((tab) => (
                    <button
                        key={tab.name}
                        onClick={() => setActive(tab.name)}
                        className={clsx(
                            'flex h-[29px] w-[200px] items-center gap-[3px] rounded-b-[5px] border-b-2 pl-3 text-[15px]',
                            active === tab.name ? 'border-[#174fb3] bg-white text-[#444]' : 'border-[#bbb] bg-[#e8e8e8] text-[#666]'
                        )}
                    >
                        {tab.icon}
                        {tab.name}
                    </button>
                ))}
            </div>
        </footer>
    );
};

export default function App() {
    return (
        <div className="flex h-screen flex-col overflow-hidden bg-white font-['Roboto',sans-serif] text-[14px] leading-5 text-[#333]">
            <Header />
            <div className="flex min-h-0 flex-1">
                <Rail />
                <div className="flex min-w-0 flex-1 flex-col">
                    <Toolbar />
                    <div className="flex min-h-0 flex-1">
                        <FeaturePanel />
                        <Viewport />
                    </div>
                    <DocumentTabs />
                </div>
            </div>
        </div>
    );
}
